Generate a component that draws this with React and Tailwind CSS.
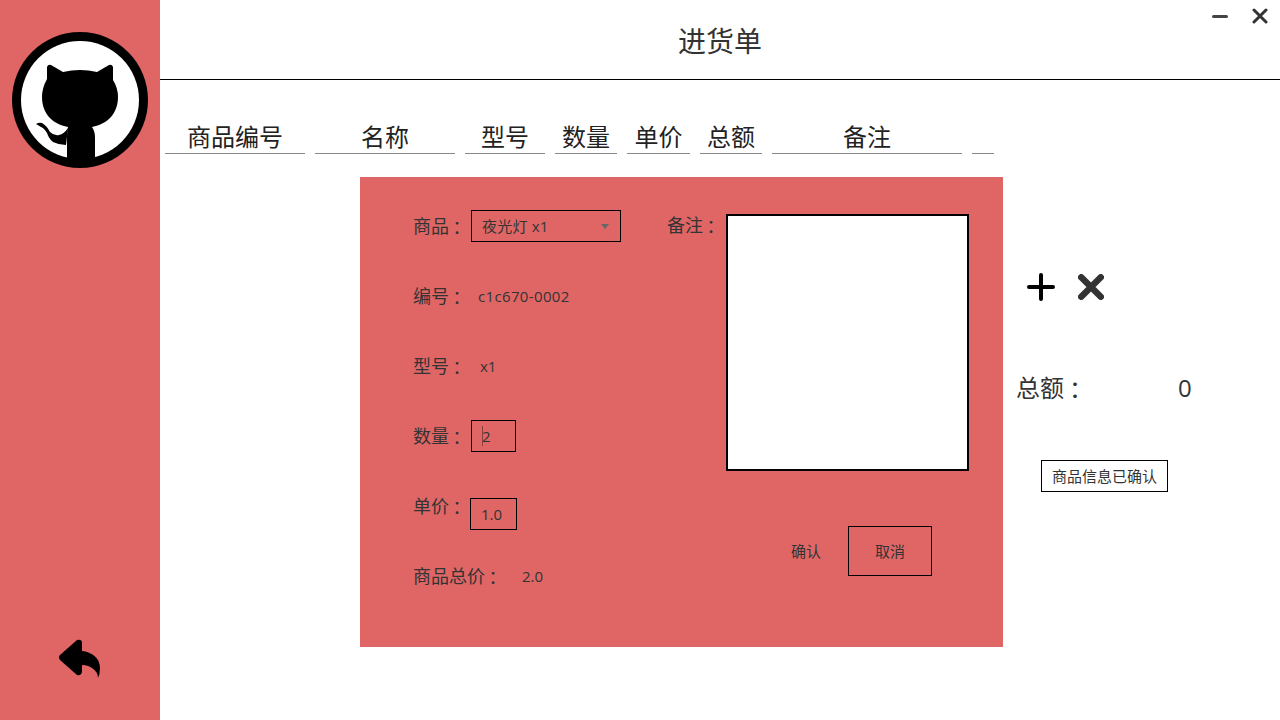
const columns = [
  { name: "商品编号", width: "w-[140px]" },
  { name: "名称", width: "w-[140px]" },
  { name: "型号", width: "w-[80px]" },
  { name: "数量", width: "w-[62px]" },
  { name: "单价", width: "w-[63px]" },
  { name: "总额", width: "w-[62px]" },
  { name: "备注", width: "w-[190px]" },
  { name: "", width: "w-[22px]" },
];

function Colon() {
  return <span className="-ml-[1px] align-[-2px] font-['Noto_Sans_CJK_TC',sans-serif] leading-none">：</span>;
}

function GithubLogo() {
  return (
    <svg width="136" height="136" viewBox="12 32 136 136">
      <circle cx="80" cy="100" r="68" fill="#000" />
      <circle cx="80" cy="100" r="59" fill="#fff" />
      <path
        d="M47 67 Q48 64 51 65 L63 72 Q80 68 97 72 L109 65 Q112 64 113 67 L113 80 Q118 88 118 97 C118 113 108 124 92 127 Q95 131 95 138 L95 160 L67 160 L67 138 Q67 131 68 127 C52 124 42 113 42 97 Q42 88 47 79 Z"
        fill="#000"
      />
      <path
        d="M36 124 Q39 122 42 123 Q47 126 50 132 Q54 136 59 135 Q64 134 68 128 L66 145 Q59 145 53 142 Q49 139 47 133 Q44 128 41 127 Z"
        fill="#000"
      />
    </svg>
  );
}

function BackIcon() {
  return (
    <svg width="44" height="42" viewBox="59 638 44 42">
      <path
        d="M61 655 L78 640 Q83 639 83 643 L83 651 C93 652 101 658 101 668 Q101 674 99 678 Q99 672 93 668 Q89 665 83 665 L83 672 Q82 676 78 675 L61 660 Q59 657 61 655 Z"
        fill="#000"
      />
    </svg>
  );
}

function PlusIcon() {
  return (
    <svg width="28" height="28" viewBox="0 0 28 28">
      <path d="M14 2 V26 M2 14 H26" stroke="#000" strokeWidth="4" strokeLinecap="round" fill="none" />
    </svg>
  );
}

function CrossIcon({ size, width }) {
  return (
    <svg width={size} height={size} viewBox="0 0 24 24">
      <path d="M3 3 L21 21 M21 3 L3 21" stroke="#333" strokeWidth={width} strokeLinecap="round" fill="none" />
    </svg>
  );
}

export default function App() {
  return (
    <div className="relative flex h-[720px] w-[1280px] overflow-hidden bg-white font-['Open_Sans','Noto_Sans_CJK_SC',sans-serif] text-[#333]">
      {/* Sidebar */}
      <aside className="flex w-[160px] flex-col items-center justify-between bg-[#e06666] pt-[32px] pb-[40px]">
        <GithubLogo />
        <BackIcon />
      </aside>

      <main className="flex-1">
        <header className="flex h-[80px] items-center justify-center border-b border-black pt-[2px]">
          <h1 className="text-[28px] leading-none">进货单</h1>
        </header>

        {/* Table head */}
        <div className="mt-[36px] flex gap-[10px] pl-[5px]">
          {columns.map((col, i) => (
            <div
              key={i}
              className={`${col.width} h-[38px] border-b border-[#888] text-center text-[24px] leading-[42px] text-[#222]`}
            >
              {col.name}
            </div>
          ))}
        </div>

        <div className="mt-[23px] ml-[200px] flex">
          {/* Form panel */}
          <section className="flex h-[470px] w-[643px] bg-[#e06666] pt-[14px] pl-[53px] text-[15px]">
            <div className="w-[254px]">
              <div className="flex h-[70px] items-center">
                <span className="w-[58px] text-[18px]">商品<Colon /></span>
                <div className="flex h-[32px] w-[150px] items-center justify-between border border-black pr-[11px] pl-[10px]">
                  <span className="tracking-[0.2px]">夜光灯 x1</span>
                  <span className="border-x-[4px] border-t-[5px] border-x-transparent border-t-[#666]"></span>
                </div>
              </div>
              <div className="flex h-[70px] items-center">
                <span className="w-[65px] text-[18px]">编号<Colon /></span>
                <span className="tracking-[0.35px]">c1c670-0002</span>
              </div>
              <div className="flex h-[70px] items-center">
                <span className="w-[67px] text-[18px]">型号<Colon /></span>
                <span>x1</span>
              </div>
              <div className="flex h-[70px] items-center">
                <span className="w-[58px] text-[18px]">数量<Colon /></span>
                <div className="relative flex h-[32px] w-[45px] items-center border border-black pl-[10px]">
                  <span className="absolute top-[5px] left-[10px] h-[20px] w-[1px] bg-[#8a3f3f]"></span>
                  <span>2</span>
                </div>
              </div>
              <div className="flex h-[70px] items-center">
                <span className="w-[57px] text-[18px]">单价<Colon /></span>
                <div className="mt-[16px] flex h-[32px] w-[47px] items-center border border-black pl-[10px]">1.0</div>
              </div>
              <div className="flex h-[70px] items-center">
                <span className="w-[109px] text-[18px]">商品总价<Colon /></span>
                <span>2.0</span>
              </div>
            </div>

            <div>
              <div className="flex">
                <span className="mt-[21px] w-[59px] text-[18px]">备注<Colon /></span>
                <textarea className="mt-[23px] h-[257px] w-[243px] resize-none border-2 border-black bg-white outline-none"></textarea>
              </div>
              <div className="mt-[55px] flex items-center pl-[124px]">
                <button className="w-[30px]">确认</button>
                <button className="ml-[27px] h-[50px] w-[84px] border border-black">取消</button>
              </div>
            </div>
          </section>

          {/* Right column */}
          <section className="flex-1 pt-[96px]">
            <div className="flex items-center gap-[23px] pl-[24px]">
              <PlusIcon />
              <CrossIcon size={26} width={6} />
            </div>
            <div className="mt-[69px] flex items-center pl-[13px] text-[24px]">
              <span className="w-[162px]">总额<Colon /></span>
              <span>0</span>
            </div>
            <button className="mt-[54px] ml-[38px] h-[32px] w-[127px] border border-black text-[15px]">商品信息已确认</button>
          </section>
        </div>
      </main>

      {/* Window controls */}
      <div className="absolute top-[8px] right-[12px] flex items-center gap-[24px]">
        <span className="h-[3px] w-[16px] rounded-full bg-[#444]"></span>
        <CrossIcon size={16} width={4.5} />
      </div>
    </div>
  );
}
